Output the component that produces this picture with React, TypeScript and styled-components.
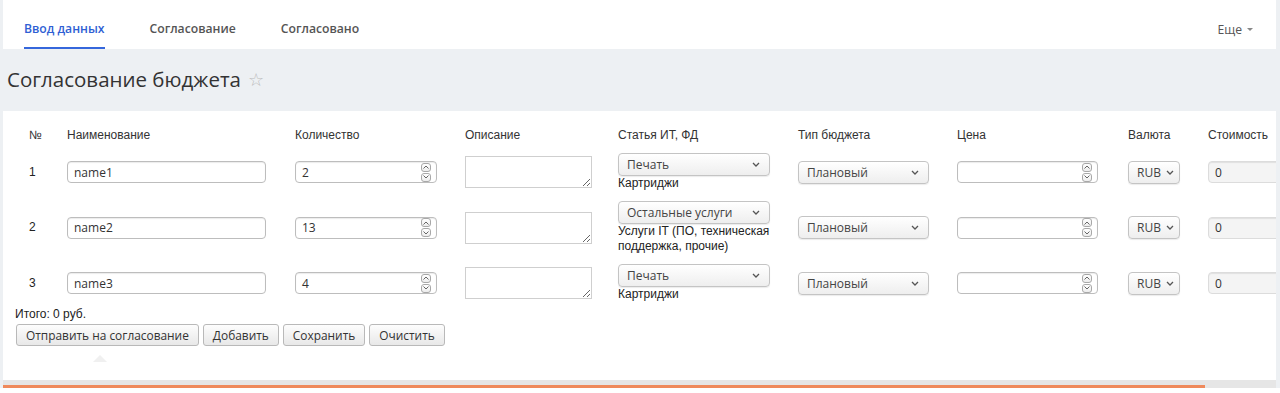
import React from 'react';
import styled, { createGlobalStyle } from 'styled-components';

const GlobalStyle = createGlobalStyle`
  html, body {
    margin: 0;
    padding: 0;
    background: #fff;
  }
  * {
    box-sizing: border-box;
  }
`;

const Page = styled.div`
  background: #edf0f3;
  padding: 0 4px 0 3px;
  font-family: 'Liberation Sans', Arial, sans-serif;
  color: #222;
`;

const Nav = styled.div`
  display: flex;
  align-items: stretch;
  height: 49px;
  background: #fff;
  padding: 0 23px 0 21px;
  font-family: 'Open Sans', sans-serif;
  font-size: 12.2px;
`;

const NavTab = styled.div<{ $active?: boolean }>`
  display: flex;
  align-items: center;
  padding-top: 10px;
  margin-right: 45px;
  font-weight: 600;
  color: ${({ $active }) => ($active ? '#2f5fd4' : '#555')};
  border-bottom: 2px solid ${({ $active }) => ($active ? '#3567dc' : 'transparent')};
`;

const NavMore = styled.div`
  margin-left: auto;
  display: flex;
  align-items: center;
  gap: 5px;
  padding-top: 9px;
  color: #555;
`;

const Caret = styled.span`
  width: 0;
  height: 0;
  border-left: 3px solid transparent;
  border-right: 3px solid transparent;
  border-top: 3px solid #888;
`;

const TitleBand = styled.div`
  height: 62px;
  display: flex;
  align-items: center;
  padding: 0 0 2px 4px;
  font-family: 'Open Sans', sans-serif;
  font-size: 20.5px;
  color: #333;
`;

const Star = styled.span`
  margin-left: 7px;
  color: #bbb;
  font-family: 'DejaVu Sans', sans-serif;
  font-size: 18px;
`;

const Card = styled.div`
  background: #fff;
  padding: 12px 0 18px 12px;
  overflow: hidden;
`;

const Table = styled.div`
  margin-left: 14px;
`;

const Row = styled.div<{ $head?: boolean }>`
  display: grid;
  grid-template-columns: 38px 228px 170px 153px 180px 159px 171px 80px 120px;
  align-items: center;
  padding: 5px 0;
  font-size: 12px;
  line-height: 15px;
  color: ${({ $head }) => ($head ? '#333' : '#222')};
`;

const TextBox = styled.div<{ $width: number; $readonly?: boolean }>`
  display: flex;
  align-items: center;
  width: ${({ $width }) => $width}px;
  height: 22px;
  padding: 0 5px 0 6px;
  border: 1px solid ${({ $readonly }) => ($readonly ? '#dcdcdc' : '#bdbdbd')};
  border-radius: 4px;
  background: ${({ $readonly }) => ($readonly ? '#f4f4f4' : '#fff')};
  box-shadow: inset 0 1px 1px rgba(0, 0, 0, 0.08);
  font-family: 'Open Sans', sans-serif;
  font-size: 12px;
  color: #333;
`;

const BoxText = styled.span`
  flex: 1;
`;

const Spinner = styled.div`
  display: flex;
  flex-direction: column;
  gap: 1px;
`;

const SpinButton = styled.div`
  width: 10px;
  height: 9px;
  border: 1px solid #a8a8a8;
  border-radius: 3px;
  background: linear-gradient(#fff, #ececec);
  display: flex;
  align-items: center;
  justify-content: center;
`;

const Area = styled.textarea`
  width: 127px;
  height: 32px;
  border: 1px solid #cfcfcf;
  border-radius: 0;
  padding: 2px;
  margin: 0;
  display: block;
  font-family: 'Open Sans', sans-serif;
  font-size: 12px;
  resize: both;
`;

const SelectBox = styled.div<{ $width: number }>`
  display: flex;
  align-items: center;
  justify-content: space-between;
  gap: 5px;
  width: ${({ $width }) => $width}px;
  height: 23px;
  padding: 0 9px 0 8px;
  border: 1px solid #c4c4c4;
  border-radius: 4px;
  background: linear-gradient(#ffffff, #eeeeee);
  box-shadow: 0 1px 1px rgba(0, 0, 0, 0.08);
  font-family: 'Open Sans', sans-serif;
  font-size: 12px;
  color: #444;
`;

const ArticleCell = styled.div`
  display: flex;
  flex-direction: column;
`;

const Note = styled.div`
  width: 160px;
  font-size: 12px;
  line-height: 15px;
  color: #222;
`;

const Total = styled.div`
  font-size: 12px;
  line-height: 15px;
  color: #222;
`;

const Buttons = styled.div`
  display: flex;
  gap: 4px;
  margin-top: 2px;
  margin-left: 1px;
`;

const Button = styled.button`
  height: 22px;
  padding: 0 9px;
  border: 1px solid #b9b9b9;
  border-radius: 3px;
  background: linear-gradient(#fdfdfd, #e8e8e8);
  font-family: 'Open Sans', sans-serif;
  font-size: 11.9px;
  color: #333;
`;

const Pointer = styled.div`
  width: 0;
  height: 0;
  margin: 9px 0 0 78px;
  border-left: 7px solid transparent;
  border-right: 7px solid transparent;
  border-bottom: 7px solid #f0f0f0;
`;

const Progress = styled.div`
  height: 8px;
  background: #e6e6e6;
  display: flex;
  align-items: flex-end;
`;

const ProgressFill = styled.div`
  height: 3px;
  background: #ef8a5c;
`;

const Chevron = () => (
  <svg width="8" height="5" viewBox="0 0 8 5" style={{ flexShrink: 0 }}>
    <path d="M1 1 L4 4 L7 1" fill="none" stroke="#555" strokeWidth="1.3" />
  </svg>
);

const Spin = () => (
  <Spinner>
    <SpinButton>
      <svg width="6" height="4" viewBox="0 0 6 4">
        <path d="M0.5 3.5 L3 1 L5.5 3.5" fill="none" stroke="#666" strokeWidth="1" />
      </svg>
    </SpinButton>
    <SpinButton>
      <svg width="6" height="4" viewBox="0 0 6 4">
        <path d="M0.5 0.5 L3 3 L5.5 0.5" fill="none" stroke="#666" strokeWidth="1" />
      </svg>
    </SpinButton>
  </Spinner>
);

const rows = [
  { n: 1, name: 'name1', qty: '2', article: 'Печать', note: 'Картриджи' },
  { n: 2, name: 'name2', qty: '13', article: 'Остальные услуги', note: 'Услуги IT (ПО, техническая поддержка, прочие)' },
  { n: 3, name: 'name3', qty: '4', article: 'Печать', note: 'Картриджи' },
];

const headers = ['№', 'Наименование', 'Количество', 'Описание', 'Статья ИТ, ФД', 'Тип бюджета', 'Цена', 'Валюта', 'Стоимость'];

export default function App() {
  return (
    <>
      <GlobalStyle />
      <Page>
        <Nav>
          <NavTab $active>Ввод данных</NavTab>
          <NavTab>Согласование</NavTab>
          <NavTab>Согласовано</NavTab>
          <NavMore>
            Еще <Caret />
          </NavMore>
        </Nav>
        <TitleBand>
          Согласование бюджета<Star>☆</Star>
        </TitleBand>
        <Card>
          <Table>
            <Row $head>
              {headers.map(h => (
                <div key={h}>{h}</div>
              ))}
            </Row>
            {rows.map(r => (
              <Row key={r.n}>
                <div>{r.n}</div>
                <TextBox $width={199}>
                  <BoxText>{r.name}</BoxText>
                </TextBox>
                <TextBox $width={142}>
                  <BoxText>{r.qty}</BoxText>
                  <Spin />
                </TextBox>
                <div>
                  <Area defaultValue="" />
                </div>
                <ArticleCell>
                  <SelectBox $width={152}>
                    {r.article}
                    <Chevron />
                  </SelectBox>
                  <Note>{r.note}</Note>
                </ArticleCell>
                <SelectBox $width={131}>
                  Плановый
                  <Chevron />
                </SelectBox>
                <TextBox $width={141}>
                  <BoxText />
                  <Spin />
                </TextBox>
                <SelectBox $width={52}>
                  RUB
                  <Chevron />
                </SelectBox>
                <TextBox $width={120} $readonly>
                  <BoxText>0</BoxText>
                </TextBox>
              </Row>
            ))}
          </Table>
          <Total>Итого: 0 руб.</Total>
          <Buttons>
            <Button>Отправить на согласование</Button>
            <Button>Добавить</Button>
            <Button>Сохранить</Button>
            <Button>Очистить</Button>
          </Buttons>
          <Pointer />
        </Card>
        <Progress>
          <ProgressFill style={{ width: `${(1202 / 1273) * 100}%` }} />
        </Progress>
      </Page>
    </>
  );
}
